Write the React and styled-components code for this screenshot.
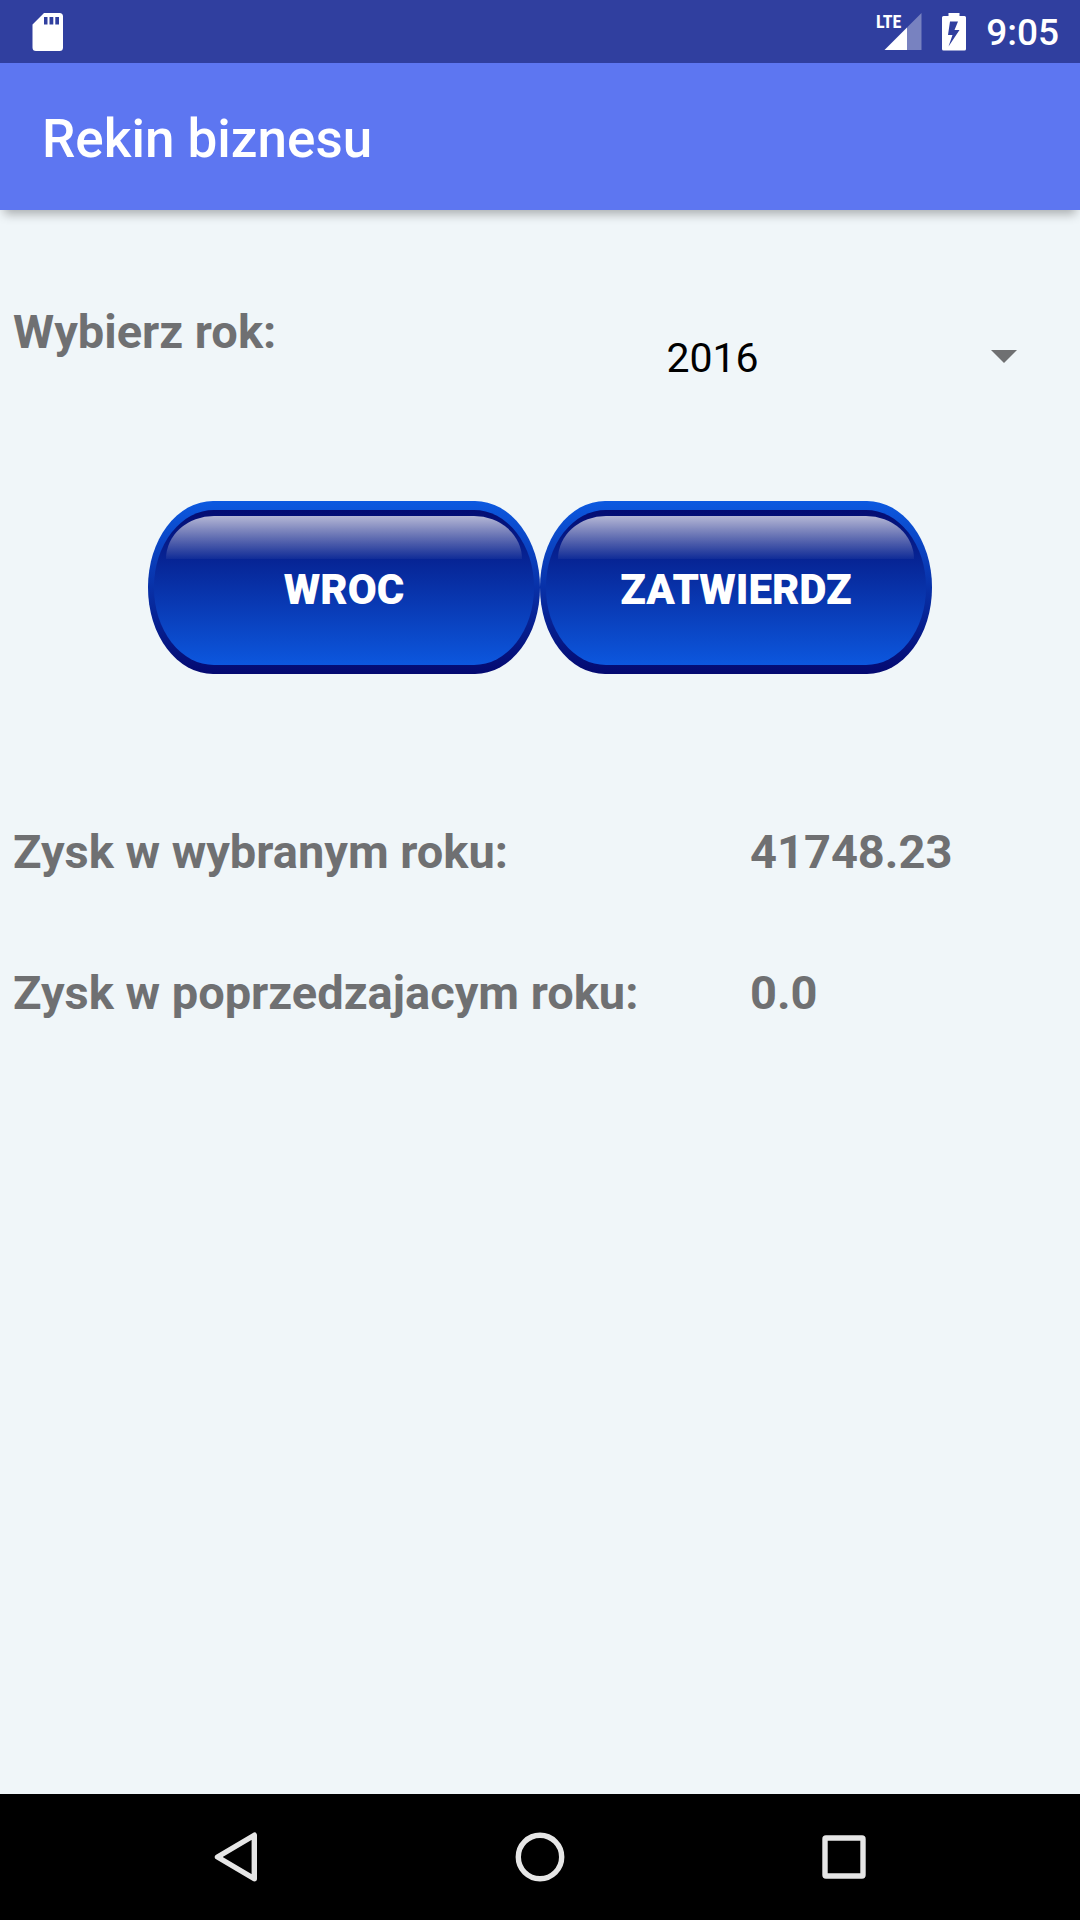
import React, { useState } from "react";
import styled, { createGlobalStyle } from "styled-components";

const GlobalStyle = createGlobalStyle`
  * {
    box-sizing: border-box;
  }
  body {
    margin: 0;
    background: #f0f6f9;
    font-family: Roboto, "Noto Sans", sans-serif;
  }
`;

const Screen = styled.div`
  min-height: 100vh;
  display: flex;
  flex-direction: column;
`;

const StatusBar = styled.div`
  display: flex;
  align-items: center;
  justify-content: space-between;
  height: 63px;
  padding: 0 21px 0 32px;
  background: #303f9f;
  color: #fff;
`;

const StatusGroup = styled.div`
  display: flex;
  align-items: center;
  gap: 20px;
`;

const StatusIcon = styled.svg`
  display: block;
  flex: none;
  overflow: visible;
`;

const NetworkType = styled.text`
  font: 700 18px "Liberation Sans Narrow", "Roboto Condensed", Roboto, sans-serif;
  fill: #fff;
`;

const Clock = styled.time`
  padding-top: 3px;
  font-size: 37px;
  line-height: 44px;
  font-weight: 500;
`;

const AppBar = styled.header`
  display: flex;
  align-items: center;
  height: 147px;
  padding: 4px 42px 0;
  background: #5d76f1;
  box-shadow: 0 8px 10px -4px rgba(0, 0, 0, 0.3);
`;

const Title = styled.h1`
  margin: 0;
  color: #fff;
  font-size: 53px;
  line-height: 62px;
  font-weight: 500;
`;

const Main = styled.main`
  flex: 1;
  padding: 94px 13px 0;
`;

const YearRow = styled.div`
  display: flex;
  align-items: flex-start;
  justify-content: space-between;
`;

const Label = styled.label`
  color: #6f7072;
  font-size: 47px;
  line-height: 56px;
  font-weight: 700;
`;

const Spinner = styled.div`
  display: grid;
  align-items: center;
  width: 40%;
  padding: 0 8px 0 0;
  margin-top: 22px;
`;

const YearSelect = styled.select`
  grid-area: 1 / 1;
  width: 100%;
  height: 63px;
  padding: 0 60px 0 21px;
  border: 0;
  background: transparent;
  appearance: none;
  color: #000;
  font: 400 41px/50px Roboto, "Noto Sans", sans-serif;
`;

const SpinnerArrow = styled.svg`
  grid-area: 1 / 1;
  justify-self: end;
  margin: 0 42px 2px 0;
  pointer-events: none;
`;

const Actions = styled.div`
  display: flex;
  justify-content: center;
  margin-top: 112px;
`;

const GlossyButton = styled.button`
  display: grid;
  width: 392px;
  height: 173px;
  padding: 9px 6px;
  border: 0;
  border-radius: 65px / 86px;
  background: linear-gradient(#0c59e0, #040970);
  color: #fff;
  font: 900 42px/50px Roboto, "Noto Sans", sans-serif;
  text-transform: uppercase;
  cursor: pointer;
`;

const ButtonFace = styled.span`
  display: grid;
  place-items: center;
  border-radius: 60px / 77px;
  background: linear-gradient(#040c72, #0c57de);
`;

const Gloss = styled.span`
  grid-area: 1 / 1;
  align-self: start;
  justify-self: stretch;
  height: 43px;
  margin: 6px 12px 0;
  border-radius: 48px 48px 0 0 / 43px 43px 0 0;
  background: linear-gradient(rgba(255, 255, 255, 0.7), rgba(255, 255, 255, 0.04));
`;

const ButtonText = styled.span`
  grid-area: 1 / 1;
  padding-top: 4px;
`;

const Results = styled.dl`
  display: grid;
  grid-template-columns: 1fr 317px;
  row-gap: 85px;
  margin: 150px 0 0;
  color: #6f7072;
  font-size: 47px;
  line-height: 56px;
  font-weight: 700;
`;

const ResultName = styled.dt`
  margin: 0;
`;

const ResultValue = styled.dd`
  margin: 0;
`;

const NavBar = styled.nav`
  display: flex;
  height: 126px;
  padding: 0 84px;
  background: #000;
`;

const NavButton = styled.button`
  flex: 1;
  display: grid;
  place-items: center;
  padding: 0;
  border: 0;
  background: transparent;
  cursor: pointer;
`;

const NavIcon = styled.svg`
  fill: none;
  stroke: #e6e6e6;
  stroke-width: 5.4;
  stroke-linejoin: round;
`;

function SdCardIcon() {
  return (
    <StatusIcon width="32" height="40" viewBox="0 0 32 40" aria-hidden="true">
      <path
        fill="#fff"
        fillRule="evenodd"
        d="M12 1H27.500Q31 1 31 4.500V35.500Q31 39 27.500 39H4Q.500 39 .500 35.500V12.500ZM12 5V12.500H15.500V5ZM17.500 5V12.500H21.300V5ZM23.300 5V12.500H27V5Z"
      />
    </StatusIcon>
  );
}

function SignalIcon() {
  return (
    <StatusIcon width="46" height="40" viewBox="0 0 46 40" role="img" aria-label="LTE">
      <path fill="#fff" fillOpacity=".35" d="M45.500 1V38H31V15.500Z" />
      <path fill="#fff" d="M31 15.500V38H8.500Z" />
      <NetworkType x="0" y="16">LTE</NetworkType>
    </StatusIcon>
  );
}

function BatteryIcon() {
  return (
    <StatusIcon width="24" height="40" viewBox="0 0 24 40" aria-hidden="true">
      <path
        fill="#fff"
        fillRule="evenodd"
        d="M6.500 1H17.500V4H22.500Q24 4 24 5.500V37Q24 38.500 22.500 38.500H1.500Q0 38.500 0 37V5.500Q0 4 1.500 4H6.500ZM8 9.500 6 23H10.500L6.500 34.500 17.500 18H12.500L16 9.500Z"
      />
    </StatusIcon>
  );
}

export default function App() {
  const [year, setYear] = useState("2016");

  return (
    <Screen>
      <GlobalStyle />
      <StatusBar>
        <SdCardIcon />
        <StatusGroup>
          <SignalIcon />
          <BatteryIcon />
          <Clock>9:05</Clock>
        </StatusGroup>
      </StatusBar>
      <AppBar>
        <Title>Rekin biznesu</Title>
      </AppBar>
      <Main>
        <YearRow>
          <Label htmlFor="year">Wybierz rok:</Label>
          <Spinner>
            <YearSelect id="year" value={year} onChange={(e) => setYear(e.target.value)}>
              <option>2015</option>
              <option>2016</option>
              <option>2017</option>
            </YearSelect>
            <SpinnerArrow width="26" height="13" viewBox="0 0 26 13" aria-hidden="true">
              <path fill="#6f7072" d="M0 0H26L13 13Z" />
            </SpinnerArrow>
          </Spinner>
        </YearRow>
        <Actions>
          <GlossyButton type="button">
            <ButtonFace>
              <Gloss />
              <ButtonText>Wroc</ButtonText>
            </ButtonFace>
          </GlossyButton>
          <GlossyButton type="button">
            <ButtonFace>
              <Gloss />
              <ButtonText>Zatwierdz</ButtonText>
            </ButtonFace>
          </GlossyButton>
        </Actions>
        <Results>
          <ResultName>Zysk w wybranym roku:</ResultName>
          <ResultValue>41748.23</ResultValue>
          <ResultName>Zysk w poprzedzajacym roku:</ResultName>
          <ResultValue>0.0</ResultValue>
        </Results>
      </Main>
      <NavBar>
        <NavButton type="button" aria-label="Wstecz">
          <NavIcon width="50" height="50" viewBox="0 0 50 50">
            <path d="M43.300 3.200V46.800L6.500 25Z" />
          </NavIcon>
        </NavButton>
        <NavButton type="button" aria-label="Ekran główny">
          <NavIcon width="50" height="50" viewBox="0 0 50 50">
            <circle cx="25" cy="25" r="21.700" />
          </NavIcon>
        </NavButton>
        <NavButton type="button" aria-label="Ostatnie aplikacje">
          <NavIcon width="50" height="50" viewBox="0 0 50 50">
            <rect x="6" y="6" width="38" height="38" rx="1" />
          </NavIcon>
        </NavButton>
      </NavBar>
    </Screen>
  );
}
